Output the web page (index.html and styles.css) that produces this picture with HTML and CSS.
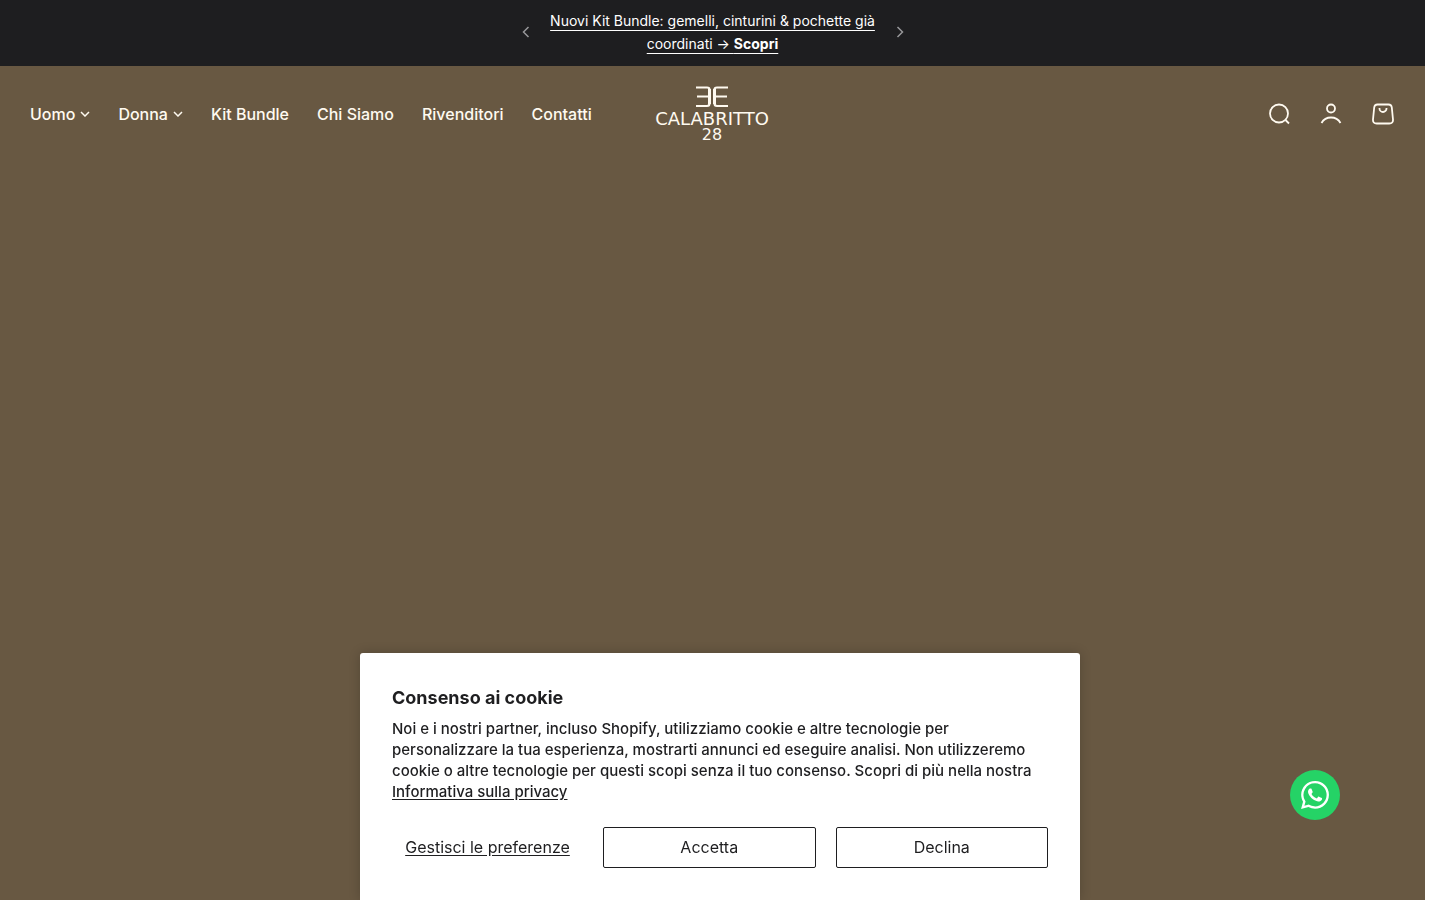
FILE: index.html
```html
<!DOCTYPE html>
<html lang="it">
  <head>
    <meta charset="UTF-8" />
    <meta name="viewport" content="width=device-width, initial-scale=1.0" />
    <title>Calabritto 28</title>
    <link rel="stylesheet" href="styles.css">
  </head>
  <body>
    <div class="announcement">
      <button type="button" class="arrow" aria-label="Precedente">
        <svg width="8" height="12" viewBox="0 0 8 12"><path d="M6.5 1L1.5 6l5 5" /></svg>
      </button>
      <p class="announcement-text">
        <a href="#">Nuovi Kit Bundle: gemelli, cinturini &amp; pochette già coordinati → <strong>Scopri</strong></a>
      </p>
      <button type="button" class="arrow" aria-label="Successivo">
        <svg width="8" height="12" viewBox="0 0 8 12"><path d="M1.5 1l5 5-5 5" /></svg>
      </button>
    </div>

    <header class="header">
      <nav class="menu">
        <button type="button" class="menu-link" aria-expanded="false">
          Uomo
          <svg width="10" height="6" viewBox="0 0 10 6"><path d="M1 1l4 4 4-4" /></svg>
        </button>
        <button type="button" class="menu-link" aria-expanded="false">
          Donna
          <svg width="10" height="6" viewBox="0 0 10 6"><path d="M1 1l4 4 4-4" /></svg>
        </button>
        <a href="#" class="menu-link">Kit Bundle</a>
        <a href="#" class="menu-link">Chi Siamo</a>
        <a href="#" class="menu-link">Rivenditori</a>
        <a href="#" class="menu-link">Contatti</a>
      </nav>

      <a href="#" class="logo" aria-label="Calabritto 28">
        <svg width="116" height="60" viewBox="0 0 116 60">
          <g fill="none" stroke="currentColor" stroke-width="2.2">
            <path d="M42 3.500h11q2.500 0 2.500 2v14q0 2.500-2.500 2.500H42M43 12.500h12" />
            <path d="M74 3.500H63q-2.500 0-2.500 2v14q0 2.500 2.500 2.500h11M61 12.500h12" />
            <path d="M55.500 5v15M60.500 5v15" stroke-width="3" />
          </g>
          <text x="58" y="41" text-anchor="middle">CALABRITTO</text>
          <text x="58" y="56" text-anchor="middle" class="logo-number">28</text>
        </svg>
      </a>

      <div class="tools">
        <a href="#" aria-label="Cerca">
          <svg width="22" height="22" viewBox="0 0 22 22"><circle cx="11" cy="10.5" r="9" /><path d="M17.500 17l3.500 3.500" /></svg>
        </a>
        <a href="#" aria-label="Account">
          <svg width="22" height="22" viewBox="0 0 22 22"><circle cx="11" cy="5.500" r="4" /><path d="M1.5 20c2-3.500 5.500-5.500 9.500-5.500s7.500 2 9.500 5.500" /></svg>
        </a>
        <a href="#" aria-label="Carrello">
          <svg width="22" height="22" viewBox="0 0 22 22"><path d="M5.500 1.500h11q3 0 3.300 3l1.200 12q.3 4-3.700 4H4.700q-4 0-3.700-4l1.200-12q.3-3 3.300-3z" /><path d="M7.500 5v.5a3.500 3.500 0 0 0 7 0V5" /></svg>
        </a>
      </div>
    </header>

    <main class="hero"></main>

    <a href="#" class="whatsapp" aria-label="WhatsApp">
      <svg width="28" height="28" viewBox="0 0 24 24">
        <path d="M17.472 14.382c-.297-.149-1.758-.867-2.030-.967-.273-.099-.471-.148-.670.150-.197.297-.767.966-.940 1.164-.173.199-.347.223-.644.075-.297-.150-1.255-.463-2.390-1.475-.883-.788-1.480-1.761-1.653-2.059-.173-.297-.018-.458.130-.606.134-.133.298-.347.446-.520.149-.174.198-.298.298-.497.099-.198.050-.371-.025-.520-.075-.149-.669-1.612-.916-2.207-.242-.579-.487-.500-.669-.510-.173-.008-.371-.010-.570-.010-.198 0-.520.074-.792.372-.272.297-1.040 1.016-1.040 2.479 0 1.462 1.065 2.875 1.213 3.074.149.198 2.096 3.200 5.077 4.487.709.306 1.262.489 1.694.625.712.227 1.360.195 1.871.118.571-.085 1.758-.719 2.006-1.413.248-.694.248-1.289.173-1.413-.074-.124-.272-.198-.570-.347" />
        <path fill-rule="evenodd" d="M12.050 0C5.500 0 .160 5.335.157 11.892c0 2.096.547 4.142 1.588 5.945L.057 24l6.305-1.654a11.900 11.900 0 0 0 5.683 1.448c6.554 0 11.890-5.335 11.893-11.893A11.820 11.820 0 0 0 12.050 0zM12.050 2a9.880 9.880 0 1 1-5.030 18.380l-.360-.214-3.740.981.998-3.648-.235-.374A9.880 9.880 0 0 1 12.050 2z" />
      </svg>
    </a>

    <section class="cookie" role="dialog" aria-labelledby="cookieTitle">
      <h2 id="cookieTitle">Consenso ai cookie</h2>
      <p>
        Noi e i nostri partner, incluso Shopify, utilizziamo cookie e altre
        tecnologie per personalizzare la tua esperienza, mostrarti annunci ed
        eseguire analisi. Non utilizzeremo cookie o altre tecnologie per questi
        scopi senza il tuo consenso. Scopri di più nella nostra
        <a href="#">Informativa sulla privacy</a>
      </p>
      <div class="cookie-buttons">
        <button type="button" class="preferences">Gestisci le preferenze</button>
        <button type="button">Accetta</button>
        <button type="button">Declina</button>
      </div>
    </section>
  </body>
</html>
```
FILE: styles.css
```css
* {
  margin: 0;
  padding: 0;
  box-sizing: border-box;
}
body {
  font-family: Inter, "Liberation Sans", Arial, sans-serif;
  font-size: 16px;
  background: #fff;
  color: #1e1e20;
  display: flex;
  flex-direction: column;
  min-height: 100vh;
  padding-right: 15px;
}
a {
  color: inherit;
}
button {
  font: inherit;
  color: inherit;
  background: none;
  border: none;
  cursor: pointer;
}
svg {
  display: block;
}
.announcement {
  display: flex;
  justify-content: center;
  align-items: center;
  gap: 8px;
  padding: 9px 16px 11px;
  background: #1e1e20;
  color: #fff;
}
.announcement-text {
  width: 100%;
  max-width: 342px;
  font-size: 14px;
  line-height: 23px;
  text-align: center;
}
.announcement-text a {
  text-underline-offset: 4px;
}
.arrow {
  padding: 4px;
  color: #98989a;
}
.arrow svg,
.menu-link svg,
.tools svg {
  fill: none;
  stroke: currentColor;
  stroke-width: 1.5;
}
.header {
  display: grid;
  grid-template-columns: 1fr auto 1fr;
  align-items: center;
  padding: 18px 31px 18px 30px;
  background: #685842;
  color: #fffaf0;
}
.menu {
  display: flex;
  gap: 28px;
}
.menu-link {
  display: flex;
  align-items: center;
  gap: 5px;
  font-weight: 500;
  line-height: 24px;
  text-decoration: none;
  white-space: nowrap;
}
.logo {
  color: #fffaf0;
}
.logo text {
  font-family: "DejaVu Sans", sans-serif;
  font-size: 18px;
  fill: currentColor;
}
.logo .logo-number {
  font-size: 16px;
}
.tools {
  display: flex;
  justify-content: flex-end;
  gap: 30px;
}
.tools svg {
  stroke-width: 1.8;
}
.hero {
  flex: 1;
  background: #685842;
}
.whatsapp {
  position: fixed;
  right: 100px;
  bottom: 80px;
  display: flex;
  align-items: center;
  justify-content: center;
  width: 50px;
  height: 50px;
  border-radius: 50%;
  background: #25d366;
}
.whatsapp svg {
  fill: #fff;
}
.cookie {
  position: fixed;
  bottom: 0;
  left: 0;
  right: 0;
  width: 100%;
  max-width: 720px;
  margin: 0 auto;
  padding: 32px;
  background: #fff;
  border-radius: 3px 3px 0 0;
  box-shadow: 0 0 12px rgba(0, 0, 0, 0.2);
}
.cookie h2 {
  margin-bottom: 8px;
  font-size: 18px;
  font-weight: 700;
  line-height: 25px;
}
.cookie p {
  font-size: 15px;
  font-weight: 500;
  line-height: 21px;
}
.cookie p a {
  text-underline-offset: 2px;
}
.cookie-buttons {
  display: grid;
  grid-template-columns: 191px 1fr 1fr;
  gap: 20px;
  margin-top: 25px;
}
.cookie-buttons button {
  height: 41px;
  padding-bottom: 2px;
  border: 1px solid #1e1e20;
  border-radius: 2px;
}
.cookie-buttons .preferences {
  border-color: transparent;
  text-decoration: underline;
  text-underline-offset: 2px;
}
```
